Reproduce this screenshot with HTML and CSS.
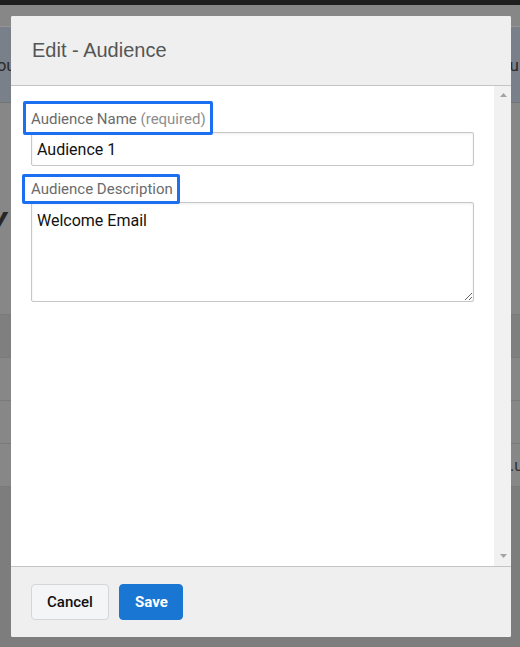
FILE: index.html
```html
<!DOCTYPE html>
<html lang="en">
<head>
<meta charset="utf-8">
<title>Edit - Audience</title>
<link rel="stylesheet" href="styles.css">
</head>
<body>
<div class="page">
  <div class="topbar"></div>
  <div class="gap"></div>
  <div class="tabs"><span class="tab-left">You</span><span class="tab-right">Menu</span></div>
  <div class="hero"><span class="hero-title">y</span></div>
  <div class="row row-dark"></div>
  <div class="row"></div>
  <div class="row"></div>
  <div class="row row-text"><span class="row-right">.u</span></div>
  <div class="row row-last"></div>
</div>

<div class="modal">
  <div class="modal-header">
    <h2 class="modal-title">Edit - Audience</h2>
  </div>
  <div class="modal-main">
    <div class="modal-body">
      <div class="field">
        <label class="label label-name" for="name">Audience Name <span class="req">(required)</span></label>
        <input class="input" id="name" type="text" value="Audience 1">
      </div>
      <div class="field field-desc">
        <label class="label label-desc" for="desc">Audience Description</label>
        <textarea class="textarea" id="desc">Welcome Email</textarea>
      </div>
    </div>
    <div class="scrollbar">
      <svg class="arrow" width="7" height="4" viewBox="0 0 7 4"><polygon points="0,4 7,4 3.5,0" fill="#a3a3a3"/></svg>
      <svg class="arrow" width="7" height="4" viewBox="0 0 7 4"><polygon points="0,0 7,0 3.5,4" fill="#a3a3a3"/></svg>
    </div>
  </div>
  <div class="modal-footer">
    <button class="btn btn-cancel" type="button">Cancel</button>
    <button class="btn btn-save" type="button">Save</button>
  </div>
</div>
</body>
</html>
```

FILE: styles.css
```css
* { box-sizing: border-box; }

html, body {
  margin: 0;
  padding: 0;
  height: 100%;
}

body {
  background: #878787;
  font-family: Roboto, "Noto Sans", Arial, sans-serif;
  overflow: hidden;
  position: relative;
}

/* dimmed page behind the dialog */
.page {
  display: flex;
  flex-direction: column;
  height: 647px;
  overflow: hidden;
}

.topbar {
  height: 5px;
  flex: none;
  background: #1f1f1f;
}

.gap {
  height: 21px;
  flex: none;
}

.tabs {
  height: 77px;
  flex: none;
  background: #7a8089;
  border-top: 1px solid #959595;
  border-bottom: 1px solid #737373;
  display: flex;
  justify-content: space-between;
  align-items: center;
  font-size: 17px;
  color: #2b2b2b;
  overflow: hidden;
}

.tab-left { margin-left: -13px; }
.tab-right { margin-right: 1px; }

.hero {
  height: 211px;
  flex: none;
  padding-top: 98px;
  overflow: hidden;
}

.hero-title {
  display: block;
  font-family: "Liberation Sans", Arial, sans-serif;
  font-weight: bold;
  font-style: italic;
  font-size: 34px;
  line-height: 34px;
  color: #262626;
  margin-left: -12px;
}

.row {
  height: 43px;
  flex: none;
  border-top: 1px solid #7a7a7a;
  display: flex;
  justify-content: flex-end;
  align-items: center;
  overflow: hidden;
}

.row-dark { background: #7f7f7f; }
.row-last { background: #7d7d7d; height: 161px; }

.row-right {
  font-size: 16px;
  color: #303030;
  margin-right: -3px;
}

/* dialog */
.modal {
  position: absolute;
  top: 16px;
  left: 11px;
  width: 500px;
  height: 621px;
  display: flex;
  flex-direction: column;
  background: #fff;
  border-radius: 2px;
  overflow: hidden;
}

.modal-header {
  height: 70px;
  flex: none;
  background: #efefef;
  border-bottom: 1px solid #c4c4c4;
  display: flex;
  align-items: center;
  padding: 0 21px;
}

.modal-title {
  margin: 0 0 1px;
  font-family: "Liberation Sans", Arial, sans-serif;
  font-weight: normal;
  font-size: 20px;
  color: #555;
}

.modal-main {
  flex: 1;
  display: flex;
  min-height: 0;
}

.modal-body {
  flex: 1;
  padding: 23px 20px 0 20px;
  display: flex;
  flex-direction: column;
}

.scrollbar {
  width: 17px;
  flex: none;
  background: #f1f1f1;
  display: flex;
  flex-direction: column;
  justify-content: space-between;
  align-items: center;
  padding: 7px 0 8px 1px;
}

.arrow { display: block; }

.field {
  display: flex;
  flex-direction: column;
  align-items: flex-start;
}

.field-desc { margin-top: 13px; }

.label {
  position: relative;
  font-size: 15px;
  line-height: 20px;
  color: #6b6b6b;
  margin-bottom: 3px;
}

.req { color: #8e8e8e; }

/* highlight frame drawn over the labels */
.label::after {
  content: "";
  position: absolute;
  border: 3px solid #1b6ff0;
  border-radius: 2px;
  pointer-events: none;
}

.label-name::after { top: -8px; bottom: -6px; left: -8px; right: -7px; }
.label-desc::after { top: -5px; bottom: -5px; left: -9px; right: -7px; }

.input,
.textarea {
  width: 100%;
  font-family: Roboto, "Noto Sans", Arial, sans-serif;
  font-size: 16px;
  color: #111;
  border: 1px solid #c6c6c6;
  border-radius: 2px;
  background: #fff;
  box-shadow: inset 0 1px 3px rgba(0, 0, 0, 0.08);
  padding: 0 5px;
  margin: 0;
  outline: none;
}

.input {
  height: 34px;
}

.textarea {
  height: 100px;
  padding: 6px 5px;
  line-height: 24px;
  resize: vertical;
  display: block;
}

.modal-footer {
  height: 71px;
  flex: none;
  background: #efefef;
  border-top: 1px solid #c4c4c4;
  display: flex;
  align-items: center;
  gap: 10px;
  padding: 0 20px;
}

.btn {
  height: 36px;
  border-radius: 4px;
  font-family: Roboto, "Noto Sans", Arial, sans-serif;
  font-size: 15px;
  padding: 0 15px;
  cursor: pointer;
}

.btn-cancel {
  width: 78px;
  background: #f4f5f7;
  border: 1px solid #d3d6da;
  color: #111;
  font-weight: 500;
}

.btn-save {
  width: 64px;
  background: #1976d2;
  border: 1px solid #1976d2;
  color: #fff;
  font-weight: 700;
}
```
